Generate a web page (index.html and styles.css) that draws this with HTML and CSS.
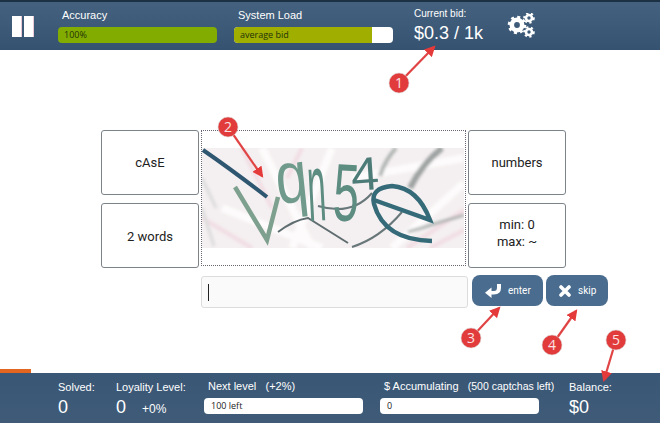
FILE: index.html
```html
<!DOCTYPE html>
<html lang="en">
<head>
  <meta charset="UTF-8" />
  <title>Captcha worker</title>
  <link rel="stylesheet" href="styles.css">
</head>
<body>
  <!-- Top bar -->
  <div class="topbar">
    <div class="pause"><span></span><span></span></div>
    <div class="meter meter-accuracy">
      <div class="meter-label">Accuracy</div>
      <div class="bar"><div class="fill fill-green" style="width: 100%;">100%</div></div>
    </div>
    <div class="meter meter-load">
      <div class="meter-label">System Load</div>
      <div class="bar"><div class="fill fill-olive" style="width: 87%;">average bid</div></div>
    </div>
    <div class="bid">
      <div class="bid-label">Current bid:</div>
      <div class="bid-value">$0.3 / 1k</div>
    </div>
    <svg class="gears" width="28" height="26" viewBox="0 0 28 26">
      <g fill="none" stroke="#fff">
        <circle cx="10" cy="12" r="5.2" stroke-width="4.6"/>
        <circle cx="10" cy="12" r="8" stroke-width="2.6" stroke-dasharray="3 3.28"/>
        <circle cx="22" cy="5" r="3" stroke-width="2.6"/>
        <circle cx="22" cy="5" r="4.8" stroke-width="2" stroke-dasharray="2.2 2.6"/>
        <circle cx="22" cy="19" r="3" stroke-width="2.6"/>
        <circle cx="22" cy="19" r="4.8" stroke-width="2" stroke-dasharray="2.2 2.6"/>
      </g>
    </svg>
  </div>

  <!-- Captcha area -->
  <div class="main">
    <div class="task">
      <div class="hints">
        <div class="hint">cAsE</div>
        <div class="hint hint-low">2 words</div>
      </div>
      <div class="captcha">
        <svg width="262" height="100" viewBox="0 0 262 100">
          <defs>
            <filter id="soft" x="-5%" y="-5%" width="110%" height="110%"><feGaussianBlur stdDeviation="1.6"/></filter>
            <filter id="ink" x="-5%" y="-5%" width="110%" height="110%"><feGaussianBlur stdDeviation=".55"/></filter>
          </defs>
          <rect width="262" height="100" fill="#f4eff0"/>
          <g fill="none" filter="url(#soft)">
            <path d="M60 0 L110 100 M130 0 L90 100 M20 60 L120 100 M150 30 L262 10 M190 100 L262 35" stroke="#fdfbfb" stroke-width="8"/>
            <path d="M40 0 L70 60 M0 70 L50 100 M205 100 L262 62 M228 100 L262 82 M100 0 L85 30" stroke="#f1dde3" stroke-width="4"/>
            <path d="M240 0 Q220 16 208 40" stroke="#9ea3a2" stroke-width="6"/>
            <path d="M194 0 Q183 12 178 28" stroke="#aeb4b1" stroke-width="4"/>
            <path d="M262 67 L206 84" stroke="#a4aba9" stroke-width="2.5"/>
            <path d="M0 30 L14 60 M0 60 L12 98" stroke="#dcdcdc" stroke-width="3"/>
          </g>
          <g fill="none" filter="url(#ink)">
            <path d="M76 84 Q92 72 106 70 L146 95" stroke="#5f6d70" stroke-width="2"/>
            <path d="M150 99 Q178 90 200 64 M116 58 Q150 68 170 45" stroke="#68777a" stroke-width="2"/>
            <path d="M1 2 Q30 22 65 49" stroke="#2f566f" stroke-width="4"/>
            <path d="M33 39 L65 92 L76 49" stroke="#7ea08e" stroke-width="4.5"/>
            <path d="M172 52 L228 72 Q216 40 190 38 Q168 40 172 56 Q182 92 230 93" stroke="#346a78" stroke-width="4.5"/>
          </g>
          <g font-family="'Liberation Sans', sans-serif" filter="url(#ink)">
            <text transform="translate(76 56) rotate(-6) scale(1.25 1.6)" font-size="46" fill="#6f9a8c">q</text>
            <text transform="translate(107 73) rotate(-3) scale(.75 2.2)" font-size="44" fill="#5d8c80">n</text>
            <text transform="translate(130 72) rotate(3) scale(1.05 1.85)" font-size="44" fill="#5d8c80">5</text>
            <text transform="translate(150 43) rotate(-4) scale(1.4 1.3)" font-size="36" fill="#4d7c78">4</text>
          </g>
        </svg>
      </div>
      <div class="hints">
        <div class="hint">numbers</div>
        <div class="hint hint-range">min: 0<br>max: ~</div>
      </div>
    </div>
    <div class="answer">
      <div class="input"><span class="caret"></span></div>
      <div class="btn btn-enter">
        <svg width="16" height="14" viewBox="0 0 16 14"><path d="M16 0 V4 Q16 10 9 10.5 H6.5 V14 L0 8.8 L6.5 3.6 V7 H9 Q12 7 12 3.5 V0 Z" fill="#fff"/></svg>
        <span>enter</span>
      </div>
      <div class="btn btn-skip">
        <svg width="12" height="12" viewBox="0 0 12 12"><path d="M2 2 L10 10 M10 2 L2 10" stroke="#fff" stroke-width="3.6" stroke-linecap="round"/></svg>
        <span>skip</span>
      </div>
    </div>
  </div>

  <div class="progress"></div>

  <!-- Bottom bar -->
  <div class="bottombar">
    <div class="stat stat-solved">
      <div class="stat-label">Solved:</div>
      <div class="stat-value">0</div>
    </div>
    <div class="stat stat-loyalty">
      <div class="stat-label">Loyality Level:</div>
      <div class="stat-value">0 <small>+0%</small></div>
    </div>
    <div class="meter meter-next">
      <div class="meter-label">Next level &nbsp; (+2%)</div>
      <div class="bar">100 left</div>
    </div>
    <div class="meter meter-money">
      <div class="meter-label">$ Accumulating &nbsp;&nbsp;<span class="left-note">(500 captchas left)</span></div>
      <div class="bar">0</div>
    </div>
    <div class="stat stat-balance">
      <div class="stat-label">Balance:</div>
      <div class="stat-value">$0</div>
    </div>
  </div>

  <!-- Numbered callouts drawn over the page -->
  <svg class="callouts" width="660" height="423" viewBox="0 0 660 423">
    <defs>
      <marker id="head" markerWidth="5" markerHeight="5" refX="4" refY="2.5" orient="auto">
        <path d="M0 0 L5 2.5 L0 5 Z" fill="#e53a3a"/>
      </marker>
    </defs>
    <g stroke="#e04444" stroke-width="2.2" marker-end="url(#head)">
      <line x1="399" y1="83" x2="434" y2="47"/>
      <line x1="228" y1="127" x2="262" y2="176"/>
      <line x1="471" y1="338" x2="499" y2="308"/>
      <line x1="552" y1="345" x2="576" y2="311"/>
      <line x1="616" y1="340" x2="604" y2="380"/>
    </g>
    <g fill="#e23b3b" stroke="#d9d0d0" stroke-width=".6">
      <circle cx="399" cy="83" r="10"/>
      <circle cx="228" cy="127" r="10"/>
      <circle cx="471" cy="338" r="10"/>
      <circle cx="552" cy="345" r="10"/>
      <circle cx="616" cy="340" r="10"/>
    </g>
    <g class="callout-num" text-anchor="middle">
      <text x="399" y="88">1</text>
      <text x="228" y="132">2</text>
      <text x="471" y="343">3</text>
      <text x="552" y="350">4</text>
      <text x="616" y="345">5</text>
    </g>
  </svg>
</body>
</html>
```

FILE: styles.css
```css
html, body {
  margin: 0;
  padding: 0;
}

body {
  position: relative;
  display: flex;
  flex-direction: column;
  width: 660px;
  height: 423px;
  overflow: hidden;
  background-color: #fff;
  font-family: 'Roboto', sans-serif;
  color: #222;
}

/* Bars */
.topbar, .bottombar {
  display: flex;
  box-sizing: border-box;
  height: 50px;
  flex: none;
  color: #fff;
  font-family: 'Liberation Sans', sans-serif;
  background: linear-gradient(#44627f, #365271);
}

.topbar {
  align-items: flex-start;
  border-top: 2px solid #1d3144;
}

.bottombar {
  background: linear-gradient(#395776, #3f5b78);
}

.pause {
  display: flex;
  gap: 3px;
  margin: 14px 0 0 12px;
}

.pause span {
  width: 9px;
  height: 21px;
  background-color: #fff;
  box-shadow: 1px 0 0 #e9c9d8;
}

.meter {
  flex: none;
  width: 159px;
}

.meter-label {
  padding-left: 4px;
  font-size: 11px;
  line-height: 13px;
  white-space: nowrap;
}

.bar {
  height: 16px;
  border-radius: 4px;
  background-color: #fff;
  overflow: hidden;
  margin-top: 5px;
  font-family: 'Open Sans', sans-serif;
  font-size: 9px;
  line-height: 16px;
  color: #222;
}

.fill {
  height: 100%;
  padding-left: 6px;
  box-sizing: border-box;
  color: #23330a;
}

.fill-green {
  background-color: #82ad00;
}

.fill-olive {
  background-color: #a0ae00;
}

.meter-accuracy {
  margin: 7px 0 0 25px;
}

.meter-load {
  margin: 7px 0 0 17px;
}

.bid {
  margin: 5px 0 0 21px;
  width: 93px;
}

.bid-label {
  font-size: 10px;
  line-height: 14px;
}

.bid-value {
  margin-top: 1px;
  font-size: 18px;
  line-height: 22px;
}

.gears {
  margin-top: 11px;
}

/* Captcha */
.main {
  flex: 1;
  padding: 80px 0 0 101px;
}

.task {
  display: flex;
  gap: 2px;
}

.hints {
  display: flex;
  flex-direction: column;
  gap: 8px;
  width: 98px;
}

.hint {
  display: flex;
  align-items: center;
  justify-content: center;
  box-sizing: border-box;
  height: 65px;
  border: 1px solid #7b8389;
  border-radius: 3px;
  text-align: center;
  font-size: 13px;
  line-height: 17px;
}

.hint-low {
  padding-top: 2px;
}

.hint-range {
  padding-bottom: 5px;
}

.captcha {
  box-sizing: border-box;
  width: 265px;
  height: 136px;
  padding-top: 17px;
  border: 1px dotted #667;
  line-height: 0;
}

.answer {
  display: flex;
  align-items: flex-start;
  gap: 3px;
  margin: 8px 0 0 100px;
}

.input {
  box-sizing: border-box;
  width: 267px;
  height: 32px;
  margin-right: 1px;
  padding: 7px 6px;
  border: 1px solid #dcdcdc;
  border-radius: 3px;
  background-color: #fafafa;
}

.caret {
  display: block;
  width: 1px;
  height: 17px;
  background-color: #222;
}

.btn {
  display: flex;
  align-items: center;
  box-sizing: border-box;
  height: 31px;
  margin-top: -1px;
  border-radius: 8px;
  background-color: #4a6c8e;
  color: #fff;
  font-size: 10px;
}

.btn-enter {
  width: 71px;
  padding-left: 13px;
  gap: 7px;
}

.btn-skip {
  width: 62px;
  padding-left: 13px;
  gap: 7px;
}

.progress {
  flex: none;
  width: 31px;
  height: 4px;
  margin-top: -4px;
  background-color: #e2661f;
}

/* Bottom stats */
.stat {
  flex: none;
}

.stat-label {
  margin-top: 8px;
  font-size: 11px;
  line-height: 13px;
}

.stat-value {
  margin-top: 1px;
  font-size: 18px;
  line-height: 24px;
}

.stat-value small {
  margin-left: 11px;
  font-size: 12px;
}

.stat-solved {
  width: 58px;
  margin-left: 58px;
}

.stat-loyalty {
  width: 88px;
}

.meter-next {
  margin-top: 7px;
}

.meter-next .bar, .meter-money .bar {
  padding-left: 7px;
}

.meter-money {
  margin: 7px 0 0 17px;
}

.left-note {
  font-size: 10.5px;
}

.stat-balance {
  margin-left: 30px;
}

/* Callouts */
.callouts {
  position: absolute;
  left: 0;
  top: 0;
}

.callout-num {
  font-family: 'Open Sans', sans-serif;
  font-size: 14px;
  fill: #fbe3e3;
}
```
